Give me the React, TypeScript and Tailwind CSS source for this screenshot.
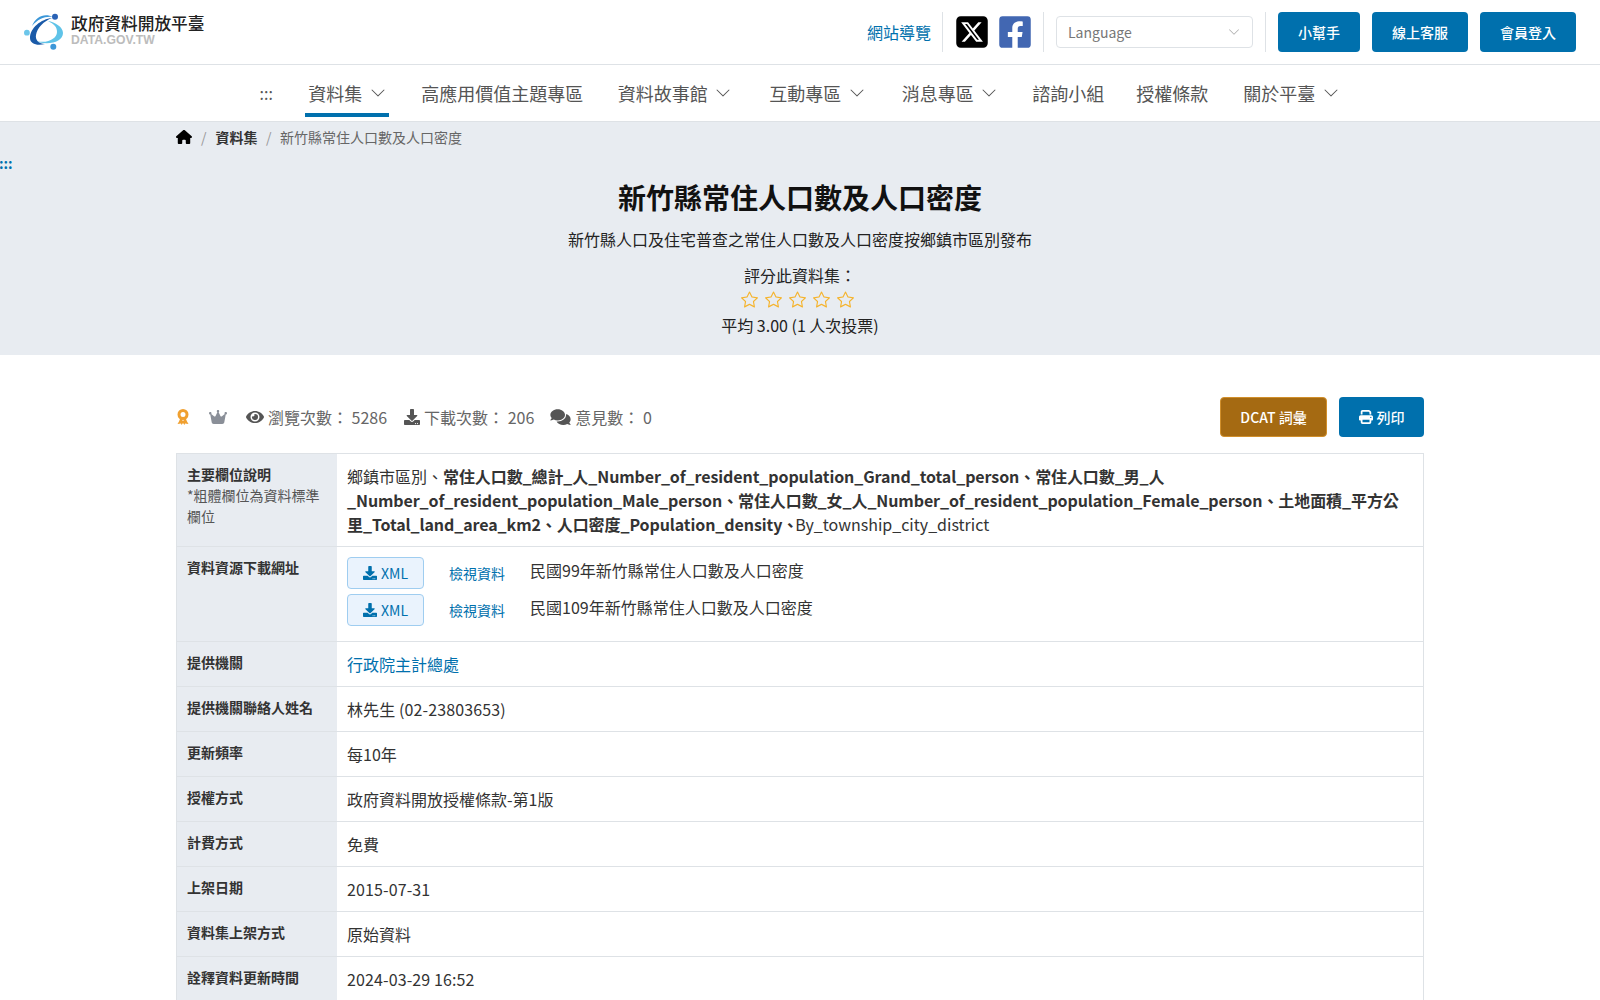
import React from 'react'
import { FaEye, FaDownload, FaComments, FaFacebookSquare } from 'react-icons/fa'
import { FaSquareXTwitter, FaHouse, FaCrown, FaPrint } from 'react-icons/fa6'
import { BsChevronDown, BsStar } from 'react-icons/bs'

const cjk = "font-['Noto_Sans_CJK_TC','Noto_Sans',sans-serif]"

const navItems = [
  { label: '資料集', arrow: true, active: true, gap: 'ml-0' },
  { label: '高應用價值主題專區', gap: 'ml-[29px]' },
  { label: '資料故事館', arrow: true, gap: 'ml-[28.5px]' },
  { label: '互動專區', arrow: true, gap: 'ml-[31.5px]' },
  { label: '消息專區', arrow: true, gap: 'ml-[30.5px]' },
  { label: '諮詢小組', gap: 'ml-[28.5px]' },
  { label: '授權條款', gap: 'ml-[26px]' },
  { label: '關於平臺', arrow: true, gap: 'ml-[29px]' },
]

const Logo = () => (
  <svg width="40" height="38" viewBox="0 0 40 38" className="shrink-0">
    <path d="M9 27 C22 32 33 26 33 19 C33 14 30 11 24 8 C31 9 39 14 39 20 C39 29 23 34 9 27 Z" fill="#5fc3e8" />
    <path d="M28 5 C17 6 6 15 6 25 C6 31 13 33 21 31 C15 31 11 27 12 22 C13 15 20 8 28 5 Z" fill="#1a5aa8" />
    <path d="M8 13 C12 3 21 0 29 4 C21 3 14 6 8 13 Z" fill="#3c97d8" />
    <circle cx="31" cy="3.7" r="3" fill="#2a62b5" />
    <circle cx="2.9" cy="19.7" r="2.9" fill="#6cc6ea" />
    <circle cx="29.3" cy="33.7" r="3" fill="#3c97d8" />
  </svg>
)

const Medal = () => (
  <svg width="14" height="16" viewBox="0 0 14 16" className="shrink-0">
    <circle cx="7" cy="5.5" r="4" fill="none" stroke="#f0a030" strokeWidth="3" />
    <path d="M4 10 H6 V11.5 H7 V14 L5.5 16 L5 14.5 L1.5 15 L3 12.5 Z M10 10 H8 V11.5 H7 V14 L8.5 16 L9 14.5 L12.5 15 L11 12.5 Z" fill="#f0a030" />
  </svg>
)

const BlueButton = ({ children }: { children: React.ReactNode }) => (
  <button className="h-10 px-5 rounded bg-[#0070ad] text-white text-sm font-medium flex items-center gap-1">
    {children}
  </button>
)

const Row = ({ label, children }: { label: React.ReactNode; children: React.ReactNode }) => (
  <div className="flex border-b border-[#dee2e6]">
    <div className="w-[160px] shrink-0 bg-[#e8ecf1] px-[10px] py-[10px] text-[14px] font-bold leading-[21px] text-[#333]">{label}</div>
    <div className="flex-1 px-[10px] py-[10px] text-base leading-6 text-[#333]">{children}</div>
  </div>
)

const DownloadRow = ({ name }: { name: string }) => (
  <div className="flex items-start h-[37px]">
    <button className="w-[77px] h-8 rounded border border-[#9fcdf0] bg-[#eaf3fd] text-[#0070ad] text-sm flex items-center justify-center gap-1">
      <FaDownload className="w-[14px] h-[14px]" /> XML
    </button>
    <a className="ml-[25px] mt-[4px] text-sm text-[#0070ad] leading-6">檢視資料</a>
    <span className="ml-[25px] mt-[1px]">{name}</span>
  </div>
)

export default function App() {
  return (
    <div className={`${cjk} w-full h-[1000px] overflow-hidden bg-white text-[#333]`}>
      <header className="h-[65px] border-b border-[#dee2e6] flex items-center justify-between pl-6 pr-6">
        <div className="flex items-center gap-[7px] -mt-[1px]">
          <Logo />
          <div className="flex flex-col mb-[4px]">
            <span className="text-[16.7px] font-medium leading-[20px] text-[#222]">政府資料開放平臺</span>
            <span className="mt-[1px] font-['Liberation_Sans',sans-serif] text-[12.2px] font-bold leading-[13px] text-[#bcbcbc]">DATA.GOV.TW</span>
          </div>
        </div>
        <div className="flex items-center -mt-[1px]">
          <a className="text-base text-[#0070ad] pr-[11px]">網站導覽</a>
          <div className="h-10 border-l border-[#dee2e6] pl-[13px] flex items-center gap-[11px] pr-3">
            <FaSquareXTwitter className="w-[32px] h-[36px] text-black" />
            <FaFacebookSquare className="w-[32px] h-[36px] text-[#4267b2]" />
          </div>
          <div className="h-10 border-l border-[#dee2e6] pl-[12px] pr-[12px] flex items-center">
            <div className="w-[197px] h-8 rounded border border-[#dee2e6] pl-[11px] pr-3 flex items-center justify-between text-sm text-[#777]">
              <span>Language</span>
              <BsChevronDown className="w-3 h-3 text-[#aaa]" />
            </div>
          </div>
          <div className="h-10 border-l border-[#dee2e6] pl-3 flex items-center gap-3">
            <BlueButton>小幫手</BlueButton>
            <BlueButton>線上客服</BlueButton>
            <BlueButton>會員登入</BlueButton>
          </div>
        </div>
      </header>

      <nav className="h-[57px] border-b border-[#dee2e6] flex items-start justify-center text-lg text-[#555]">
        <span className="w-[17px] mr-[30.5px] h-[52px] pt-[16px] text-center text-base leading-6 text-[#555]">:::</span>
        {navItems.map((item) => (
          <a
            key={item.label}
            className={`${item.gap} flex items-center gap-[7px] h-[52px] px-[3px] pt-[8px] border-b-[4px] ${item.active ? 'border-[#0070ad]' : 'border-transparent'}`}
          >
            {item.label}
            <span className={item.arrow ? 'w-[17px] flex justify-center' : 'hidden'}>
              <BsChevronDown className="w-4 h-4" />
            </span>
          </a>
        ))}
      </nav>

      <section className="h-[233px] bg-[#e8ecf1] relative">
        <div className="w-[1248px] mx-auto flex items-center h-[29px] text-sm">
          <FaHouse className="w-4 h-4 text-black" />
          <span className="mx-[9px] text-[#999]">/</span>
          <span className="font-bold text-[#333]">資料集</span>
          <span className="mx-[8.5px] text-[#999]">/</span>
          <span className="text-[#666]">新竹縣常住人口數及人口密度</span>
        </div>
        <span className="absolute -left-[1px] top-[31px] text-sm font-bold leading-5 text-[#0070ad]">:::</span>
        <div className="flex flex-col items-center">
          <h1 className="mt-[26px] text-[28px] font-bold leading-10 text-[#111]">新竹縣常住人口數及人口密度</h1>
          <p className="mt-[10px] text-base leading-6 text-[#222]">新竹縣人口及住宅普查之常住人口數及人口密度按鄉鎮市區別發布</p>
          <p className="mt-[12px] text-base leading-6 text-[#222]">評分此資料集：</p>
          <div className="flex gap-[7px] h-6 items-center pr-[6px]">
            {[0, 1, 2, 3, 4].map((i) => (
              <BsStar key={i} className="w-[17px] h-[17px] text-[#f5b32c]" />
            ))}
          </div>
          <p className="mt-[2px] text-base leading-6 text-[#222]">平均 3.00 (1 人次投票)</p>
        </div>
      </section>

      <main className="w-[1248px] mx-auto">
        <div className="h-10 mt-[42px] mb-4 flex items-center justify-between text-base text-[#666]">
          <div className="flex items-center">
            <Medal />
            <FaCrown className="ml-[19px] w-[18px] h-[16px] text-[#8a8f98]" />
            <FaEye className="ml-[19px] w-[18px] h-[18px] text-[#555]" />
            <span className="ml-[4px]">瀏覽次數： 5286</span>
            <FaDownload className="ml-[17px] w-4 h-4 text-[#555]" />
            <span className="ml-[4px]">下載次數： 206</span>
            <FaComments className="ml-4 w-[21px] h-[18px] text-[#555]" />
            <span className="ml-[4px]">意見數： 0</span>
          </div>
          <div className="flex items-center gap-3">
            <button className="h-10 w-[107px] rounded border border-[#d18f2b] bg-[#a56a12] text-white text-sm font-medium">DCAT 詞彙</button>
            <button className="h-10 w-[85px] rounded bg-[#0070ad] text-white text-sm font-medium flex items-center justify-center gap-1">
              <FaPrint className="w-[14px] h-[14px]" />列印
            </button>
          </div>
        </div>

        <div className="border border-b-0 border-[#dee2e6]">
          <Row
            label={
              <>
                主要欄位說明
                <div className="font-normal text-[#555]">*粗體欄位為資料標準欄位</div>
              </>
            }
          >
            鄉鎮市區別、
            <b className="tracking-[-0.09px]">
              常住人口數_總計_人_Number_of_resident_population_Grand_total_person、常住人口數_男_人
              _Number_of_resident_population_Male_person、常住人口數_女_人_Number_of_resident_population_Female_person、土地面積_平方公里_Total_land_area_km2、人口密度_Population_density、
            </b>
            <span className="-ml-[3px]">By_township_city_district</span>
          </Row>
          <Row label="資料資源下載網址">
            <DownloadRow name="民國99年新竹縣常住人口數及人口密度" />
            <DownloadRow name="民國109年新竹縣常住人口數及人口密度" />
          </Row>
          <Row label="提供機關"><a className="text-[#0070ad]">行政院主計總處</a></Row>
          <Row label="提供機關聯絡人姓名"><span className="tracking-[0.12px]">林先生 (02-23803653)</span></Row>
          <Row label="更新頻率">每10年</Row>
          <Row label="授權方式">政府資料開放授權條款-第1版</Row>
          <Row label="計費方式">免費</Row>
          <Row label="上架日期"><span className="tracking-[0.12px]">2015-07-31</span></Row>
          <Row label="資料集上架方式">原始資料</Row>
          <Row label="詮釋資料更新時間"><span className="tracking-[0.12px]">2024-03-29 16:52</span></Row>
        </div>
      </main>
    </div>
  )
}
